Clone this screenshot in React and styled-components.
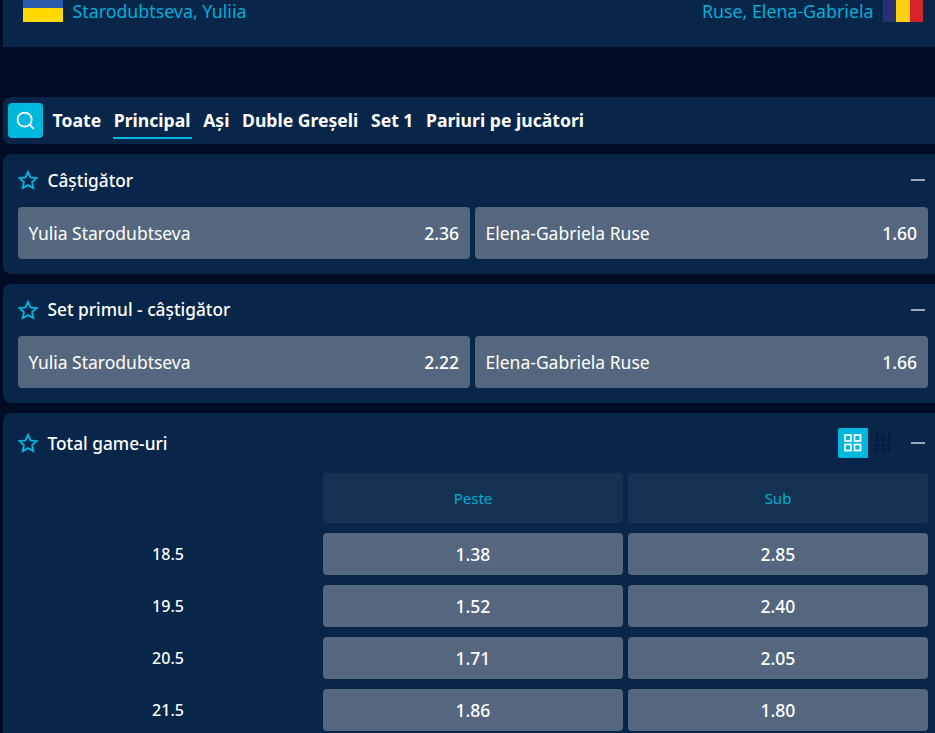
import React from 'react'
import styled, { createGlobalStyle } from 'styled-components'
import { Search } from 'lucide-react'

const totals = [
  { line: '18.5', over: '1.38', under: '2.85' },
  { line: '19.5', over: '1.52', under: '2.40' },
  { line: '20.5', over: '1.71', under: '2.05' },
  { line: '21.5', over: '1.86', under: '1.80' },
]

const tabs = ['Toate', 'Principal', 'Ași', 'Duble Greșeli', 'Set 1', 'Pariuri pe jucători']

function FavStar() {
  return (
    <svg width="20" height="20" viewBox="0 0 20 20" fill="none" stroke="#00b8de" strokeWidth="1.8" strokeLinejoin="miter">
      <polygon points="10,1.8 12.5,7.3 18.6,8 14.1,12.1 15.3,18.1 10,15.1 4.7,18.1 5.9,12.1 1.4,8 7.5,7.3" />
    </svg>
  )
}

function Market({ title, rows }) {
  return (
    <Card>
      <CardHeader>
        <FavStar />
        <CardTitle>{title}</CardTitle>
        <Collapse />
      </CardHeader>
      <OddsRow>
        {rows.map(r => (
          <OddButton key={r.name}>
            <span>{r.name}</span>
            <OddValue>{r.odd}</OddValue>
          </OddButton>
        ))}
      </OddsRow>
    </Card>
  )
}

export default function App() {
  return (
    <Page>
      <GlobalStyle />
      <MatchHeader>
        <Player>
          <FlagUa />
          Starodubtseva, Yuliia
        </Player>
        <Player>
          Ruse, Elena-Gabriela
          <FlagRo><i /><i /><i /></FlagRo>
        </Player>
      </MatchHeader>

      <TabBar>
        <SearchButton><Search size={21} strokeWidth={2} /></SearchButton>
        {tabs.map(t => (
          <Tab key={t} active={t === 'Principal'}>{t}</Tab>
        ))}
      </TabBar>

      <Market
        title="Câștigător"
        rows={[
          { name: 'Yulia Starodubtseva', odd: '2.36' },
          { name: 'Elena-Gabriela Ruse', odd: '1.60' },
        ]}
      />
      <Market
        title="Set primul - câștigător"
        rows={[
          { name: 'Yulia Starodubtseva', odd: '2.22' },
          { name: 'Elena-Gabriela Ruse', odd: '1.66' },
        ]}
      />

      <Card>
        <TotalsHeader>
          <FavStar />
          <CardTitle>Total game-uri</CardTitle>
          <GridToggle>
            <svg width="18" height="18" viewBox="0 0 18 18" fill="none" stroke="#fff" strokeWidth="1.7">
              <rect x="1" y="1" width="6" height="6" />
              <rect x="10.5" y="1" width="6" height="6" />
              <rect x="1" y="10.5" width="6" height="6" />
              <rect x="10.5" y="10.5" width="6" height="6" />
            </svg>
          </GridToggle>
          <SliderIcon>
            <svg width="20" height="18" viewBox="0 0 20 18" fill="none" stroke="#001a38" strokeWidth="1.7">
              <path d="M4 0v9M4 13v5M10 0v4M10 8v10M16 0v9M16 13v5M1 11h6M7 6h6M13 11h6" />
            </svg>
          </SliderIcon>
          <Collapse />
        </TotalsHeader>
        <TotalsGrid>
          <span />
          <ColumnHead>Peste</ColumnHead>
          <ColumnHead>Sub</ColumnHead>
          {totals.map(t => (
            <React.Fragment key={t.line}>
              <LineLabel>{t.line}</LineLabel>
              <TotalOdd>{t.over}</TotalOdd>
              <TotalOdd>{t.under}</TotalOdd>
            </React.Fragment>
          ))}
        </TotalsGrid>
      </Card>
    </Page>
  )
}

const GlobalStyle = createGlobalStyle`
  html, body {
    margin: 0;
    height: 733px;
    overflow: hidden;
    background: #000b24;
  }
  * { box-sizing: border-box; }
`

const Page = styled.div`
  height: 733px;
  overflow: hidden;
  padding-left: 3px;
  font-family: "Noto Sans", "Open Sans", sans-serif;
  color: #fff;
`

const MatchHeader = styled.div`
  height: 47px;
  margin-bottom: 50px;
  padding: 0 12px 25px 20px;
  background: #07264a;
  display: flex;
  justify-content: space-between;
  align-items: flex-start;
`

const Player = styled.div`
  display: flex;
  align-items: flex-start;
  gap: 9.5px;
  font-size: 17.8px;
  line-height: 22px;
  color: #00aed6;
`

const FlagUa = styled.div`
  width: 40px;
  height: 22px;
  background: linear-gradient(#2a5cab 0 8px, #ffd800 8px 100%);
`

const FlagRo = styled.div`
  width: 40px;
  height: 22px;
  display: flex;
  i { flex: 1; background: #2b3075; }
  i:nth-child(2) { background: #fdd016; }
  i:nth-child(3) { background: #d6222b; }
`

const TabBar = styled.div`
  height: 47px;
  margin-bottom: 10px;
  padding-left: 5px;
  background: #07264a;
  border-radius: 8px 0 0 8px;
  display: flex;
  align-items: center;
  gap: 12.6px;
`

const SearchButton = styled.div`
  width: 35px;
  height: 35px;
  margin-right: -3px;
  border-radius: 4px;
  background: #00b8de;
  color: #fff;
  display: flex;
  align-items: center;
  justify-content: center;
`

const Tab = styled.div`
  height: 47px;
  padding: 0 1px;
  margin: 0 -1px;
  font-size: 17.6px;
  font-weight: 700;
  line-height: 46px;
  position: relative;
  &::after {
    content: '';
    display: ${props => (props.active ? 'block' : 'none')};
    position: absolute;
    left: 0;
    right: 0;
    bottom: 5px;
    height: 2px;
    background: #00b8de;
  }
`

const Card = styled.section`
  margin-bottom: 10px;
  padding: 0 7px 15px 15px;
  background: #07264a;
  border-radius: 8px 0 0 8px;
`

const CardHeader = styled.div`
  height: 52.5px;
  display: flex;
  align-items: center;
  gap: 9.5px;
  padding-right: 3px;
`

const CardTitle = styled.div`
  flex: 1;
  font-size: 17.3px;
  font-weight: 500;
`

const Collapse = styled.div`
  width: 14px;
  height: 2px;
  margin-left: 0.5px;
  background: #9aa8b8;
`

const OddsRow = styled.div`
  display: grid;
  grid-template-columns: 452px 453px;
  gap: 5px;
`

const OddButton = styled.div`
  height: 52px;
  padding: 0 11px 0 10.5px;
  border-radius: 4px;
  background: #55677e;
  display: flex;
  align-items: center;
  justify-content: space-between;
  font-size: 17.5px;
`

const OddValue = styled.span`
  font-weight: 500;
`

const TotalsHeader = styled(CardHeader)`
  height: 60px;
`

const GridToggle = styled.div`
  width: 30px;
  height: 30px;
  margin-right: -4.5px;
  border-radius: 2px 0 0 2px;
  background: #00b8de;
  display: flex;
  align-items: center;
  justify-content: center;
`

const SliderIcon = styled.div`
  width: 20px;
  height: 30px;
  margin-right: 8px;
  display: flex;
  align-items: center;
  justify-content: center;
`

const TotalsGrid = styled.div`
  display: grid;
  grid-template-columns: 300px 300px 300px;
  grid-template-rows: 50px repeat(4, 42px);
  column-gap: 5px;
  row-gap: 10px;
`

const ColumnHead = styled.div`
  border-radius: 4px;
  background: #143353;
  color: #00aed6;
  font-size: 15px;
  display: flex;
  align-items: center;
  justify-content: center;
`

const LineLabel = styled.div`
  font-size: 16px;
  font-weight: 500;
  display: flex;
  align-items: center;
  justify-content: center;
`

const TotalOdd = styled(LineLabel)`
  border-radius: 4px;
  background: #55677e;
  font-size: 17.5px;
`
